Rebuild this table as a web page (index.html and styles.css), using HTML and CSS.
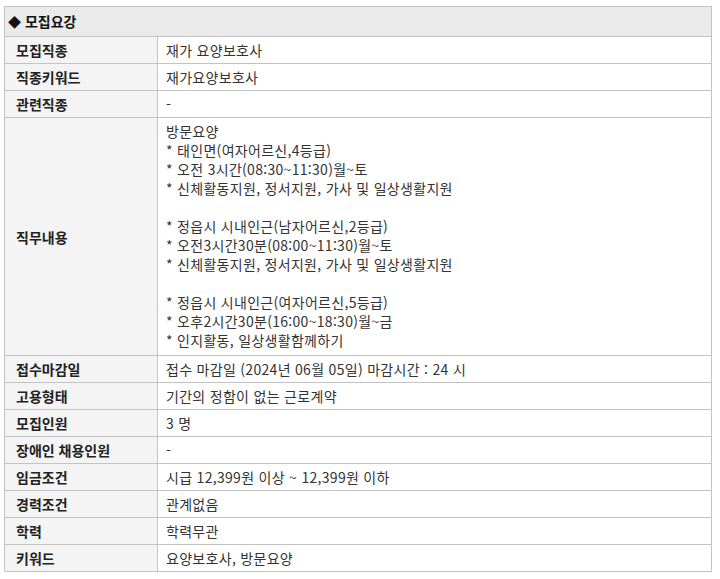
FILE: index.html
```html
<!DOCTYPE html>
<html lang="ko">
<head>
<meta charset="utf-8">
<link rel="stylesheet" href="styles.css">
</head>
<body>
<div class="wrap">
<table class="info">
  <colgroup>
    <col class="col-label">
    <col class="col-value">
  </colgroup>
  <thead>
    <tr><th colspan="2" class="head"><span class="dia">◆</span> 모집요강</th></tr>
  </thead>
  <tbody>
    <tr><th>모집직종</th><td>재가 요양보호사</td></tr>
    <tr><th>직종키워드</th><td>재가요양보호사</td></tr>
    <tr><th>관련직종</th><td>-</td></tr>
    <tr><th>직무내용</th><td class="multi">방문요양<br>* 태인면(여자어르신,4등급)<br>* 오전 3시간(08:30~11:30)월~토<br>* 신체활동지원, 정서지원, 가사 및 일상생활지원<br><br>* 정읍시 시내인근(남자어르신,2등급)<br>* 오전3시간30분(08:00~11:30)월~토<br>* 신체활동지원, 정서지원, 가사 및 일상생활지원<br><br>* 정읍시 시내인근(여자어르신,5등급)<br>* 오후2시간30분(16:00~18:30)월~금<br>* 인지활동, 일상생활함께하기</td></tr>
    <tr><th>접수마감일</th><td>접수 마감일 (2024년 06월 05일) 마감시간 : 24 시</td></tr>
    <tr><th>고용형태</th><td>기간의 정함이 없는 근로계약</td></tr>
    <tr><th>모집인원</th><td>3 명</td></tr>
    <tr><th>장애인 채용인원</th><td>-</td></tr>
    <tr><th>임금조건</th><td>시급 12,399원 이상 ~ 12,399원 이하</td></tr>
    <tr><th>경력조건</th><td>관계없음</td></tr>
    <tr><th>학력</th><td>학력무관</td></tr>
    <tr><th>키워드</th><td>요양보호사, 방문요양</td></tr>
  </tbody>
</table>
</div>
</body>
</html>
```
FILE: styles.css
```css
html, body {
  margin: 0;
  padding: 0;
  background: #ffffff;
}
body {
  font-family: "Noto Sans CJK KR", "Noto Sans", sans-serif;
  font-size: 14px;
  color: #333333;
}
.wrap {
  padding: 6px 8px 0 4px;
}
.info {
  width: 708px;
  border-collapse: collapse;
  table-layout: fixed;
}
.col-label {
  width: 153px;
}
.info th,
.info td {
  border: 1px solid #c3c3c3;
  line-height: 19px;
  vertical-align: middle;
  text-align: left;
}
.info th {
  background: #f4f4f4;
  color: #222222;
  font-weight: bold;
  padding: 4px 11px 3px 11px;
}
.info td {
  background: #ffffff;
  padding: 4px 8px 3px 8px;
  letter-spacing: 0.3px;
}
.info td.multi {
  padding: 4px 8px 5px 8px;
}
.info th.head {
  background: #eaeaea;
  color: #111111;
  height: 30px;
  padding: 0 4px 0 3px;
  box-sizing: border-box;
}
.dia {
  font-size: 13px;
}
```
